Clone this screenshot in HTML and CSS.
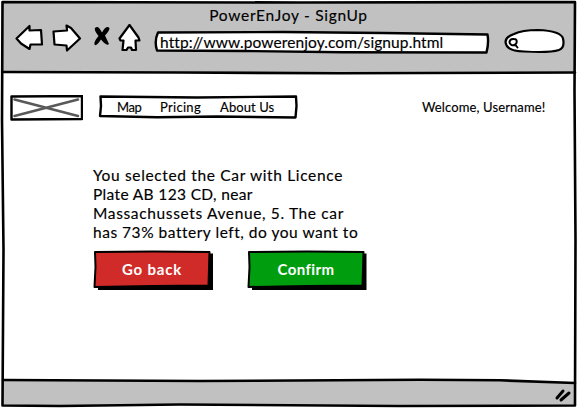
FILE: index.html
```
<!DOCTYPE html>
<html lang="en">
<head>
<meta charset="utf-8">
<title>PowerEnJoy - SignUp</title>
<link rel="stylesheet" href="styles.css">
</head>
<body>
<div class="browser">
  <svg class="frame" viewBox="0 0 577 408" aria-hidden="true">
    <path class="chrome" d="M2 2H575V73L300 73.5L2 72Z"/>
    <path class="chrome" d="M3 380.5L200 381L490 380L575 383V405L200 404.5L3 406Z"/>
    <path class="line" d="M2.5 2L300 2.500L575 2L574.5 90L575.5 240L575 405.5L400 406L180 404.5L60 406L2.5 405.5L3.5 250L2 120Z"/>
    <path class="line" d="M3 72L180 72.5L340 73.3L575 72.5"/>
    <path class="line" d="M3 380L200 381L420 379.8L500 380.3L575 383"/>
    <path class="grip" d="M557 398L563 391M561 400L569 393"/>
  </svg>
  <header class="toolbar">
    <div class="title"><span>PowerEnJoy - SignUp</span></div>
    <div class="controls">
      <svg class="tools" viewBox="0 0 130 34" aria-hidden="true">
        <path class="icon" d="M4.500 14.500L17.500 2V6.500L29 6L30 20.500H18.500L17.500 25L9 19.500Z"/>
        <path class="icon" d="M41.500 7.500L55 6.500L54.500 1.500L59 4L68 14.500L55 26.500L54.500 21.500L42.500 20.500Z"/>
        <path class="icon" d="M117.500 1L107.500 14.500L108.500 16.500H111.500L110.500 26H114.500L116 23.500H119L120 26H124L123.500 16.500H127.500L126.500 13.500Z"/>
        <path class="close" d="M83.500 3.500Q86.500 1 90 8.500Q94 1.500 97 3.500Q99 5 93 11.500L97 20Q94.500 22.500 89 15.500Q84 23 82.500 20.500Q81.500 18 86.500 12Q81 5 83.500 3.500Z"/>
      </svg>
      <div class="address">
        <svg class="outline" viewBox="0 0 340 26" aria-hidden="true"><path class="box" d="M5 2.500L130 2L230 3L334.500 4.500Q336 13 333.500 22.500L190 22.300L90 21L4 20.500Q1 11 5 2.500Z"/></svg>
        <span>http://www.powerenjoy.com/signup.html</span>
      </div>
      <svg class="search" viewBox="0 0 66 30" aria-hidden="true">
        <path class="icon" d="M12 6Q20 2 36 2Q59 3 61 10.500Q63 20 57 22Q48 25 22 23.500Q4 23 3.500 14Q3.500 9 12 6Z"/>
        <path class="lens" d="M7.500 14Q8 10.500 12 11Q15.500 11 14.500 15Q13 18 9.500 17Q7.500 16 7.500 14ZM13.500 17L15.500 19.500"/>
      </svg>
    </div>
  </header>
  <main>
    <div class="topbar">
      <svg class="logo" viewBox="0 0 74 28" aria-hidden="true"><path class="box" d="M2.500 1.500L73 1V24L2.500 24.500Z"/><path class="cross" d="M5.500 4.500L69 21M5.500 21L69 4.500"/></svg>
      <nav>
        <svg class="outline" viewBox="0 0 202 26" aria-hidden="true"><path class="box" d="M3.500 2.500L100 3.500L199 2.500L199.500 12L198.500 23.500L120 22.500L60 23.300L3 22L4 12Z"/></svg>
        <a class="map">Map</a><a class="pricing">Pricing</a><a class="about">About Us</a>
      </nav>
      <p class="welcome">Welcome, Username!</p>
    </div>
    <section class="message">
      <p class="line-one">You selected the Car with Licence</p>
      <p class="line-two">Plate AB 123 CD, near</p>
      <p class="line-three">Massachussets Avenue, 5. The car</p>
      <p class="line-four">has 73% battery left, do you want to</p>
    </section>
    <div class="actions">
      <button class="back"><svg class="outline" viewBox="0 0 122 42" aria-hidden="true"><path d="M5 4L120 3.500V40H5Z"/><path class="face" d="M2 2L60 1.500L116.500 2L115.500 35.500L60 36L1.500 37L2.500 17Z"/></svg><span>Go back</span></button>
      <button class="confirm"><svg class="outline" viewBox="0 0 122 42" aria-hidden="true"><path d="M5 4L119.500 3.500V40H5Z"/><path class="face" d="M2 2L60 1.500L116.500 2L115.500 35.500L60 36L1.500 37L2.500 17Z"/></svg><span>Confirm</span></button>
    </div>
  </main>
</div>
</body>
</html>
```
FILE: styles.css
```
* { box-sizing: border-box; }
body { margin: 0; background: #fff; color: #000; font-family: Lato, "Liberation Sans", sans-serif; -webkit-text-stroke: 0.15px currentColor; }
p { margin: 0; white-space: nowrap; }
svg { display: block; fill: #000; stroke-linejoin: round; stroke-linecap: round; }
.browser { position: relative; isolation: isolate; width: 577px; height: 408px; overflow: hidden; }
.frame { position: absolute; inset: 0; z-index: -1; width: 577px; height: 408px; }
.chrome { fill: #c1c1c1; }
.line { fill: none; stroke: #000; stroke-width: 2.6; }
.grip { fill: none; stroke: #000; stroke-width: 3; }
.toolbar { height: 73px; padding-top: 6px; }
.title { height: 18px; text-align: center; font-size: 15.5px; line-height: 18px; letter-spacing: 0.7px; }
.controls { display: flex; padding-left: 12px; }
.tools { width: 130px; height: 34px; margin-right: 11px; }
.icon { fill: #fff; stroke: #000; stroke-width: 2.2; }
.close { fill: #000; }
.address { position: relative; width: 340px; height: 26px; margin: 6px 9px 0 0; padding-left: 7px; font-size: 15.5px; line-height: 25px; letter-spacing: 0.1px; white-space: nowrap; }
.outline { position: absolute; inset: 0; z-index: -1; width: 100%; height: 100%; }
.box { fill: #fff; stroke: #000; stroke-width: 2.4; }
.search { width: 66px; height: 30px; margin-top: 4px; }
.lens { fill: none; stroke: #000; stroke-width: 2; }
.topbar { display: flex; align-items: flex-start; padding: 21px 0 0 9px; font-size: 13px; line-height: 26px; }
.logo { width: 74px; height: 28px; margin: 1px 14px 0 0; }
.cross { fill: none; stroke: #595959; stroke-width: 2.6; }
nav { position: relative; display: flex; width: 202px; height: 26px; padding-left: 20px; white-space: nowrap; }
.map { width: 43px; letter-spacing: -0.4px; }
.pricing { width: 60px; letter-spacing: 0.3px; }
.about { letter-spacing: 0.1px; }
.welcome { margin-left: 123px; letter-spacing: 0.12px; }
.message { height: 80px; padding: 0 0 0 93px; margin-top: 43px; font-size: 15.5px; line-height: 19px; }
.line-one { letter-spacing: 0.65px; }
.line-two { letter-spacing: 0.35px; }
.line-three { letter-spacing: 0.64px; }
.line-four { letter-spacing: 0.52px; }
.actions { display: flex; gap: 32px; padding: 4px 0 0 93px; }
button { position: relative; isolation: isolate; width: 122px; height: 42px; padding: 0 4px 4px 0; border: 0; background: none; color: #fff; font: 700 15px/20px Lato, "Liberation Sans", sans-serif; -webkit-text-stroke: 0; }
.back { letter-spacing: 0.8px; }
.confirm { letter-spacing: 0.4px; }
.face { stroke: #000; stroke-width: 2; }
.back .face { fill: #d12b29; }
.confirm .face { fill: #009e0f; }
```
